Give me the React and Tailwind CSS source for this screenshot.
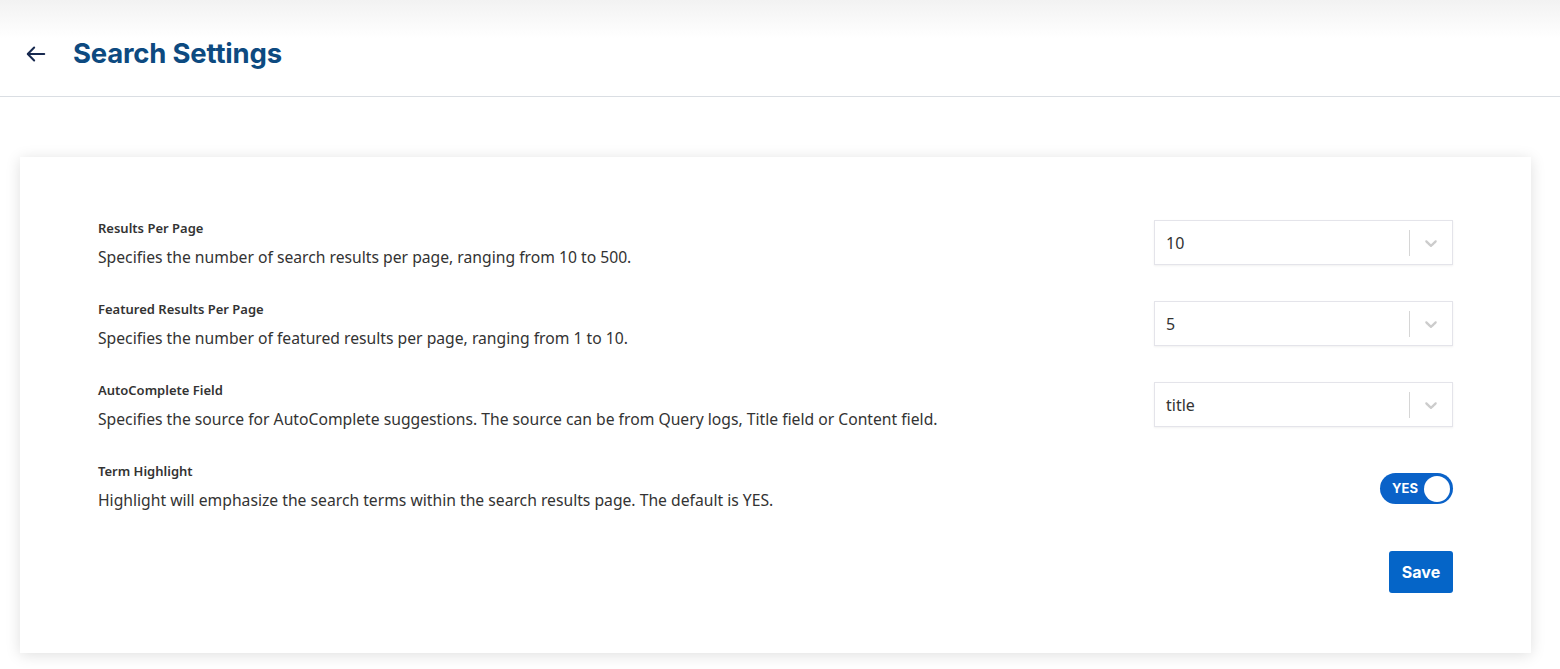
import { useState } from 'react'

const settings = [
  { label: 'Results Per Page', desc: 'Specifies the number of search results per page, ranging from 10 to 500.', value: '10' },
  { label: 'Featured Results Per Page', desc: 'Specifies the number of featured results per page, ranging from 1 to 10.', value: '5' },
  { label: 'AutoComplete Field', desc: 'Specifies the source for AutoComplete suggestions. The source can be from Query logs, Title field or Content field.', value: 'title' },
]

function Select({ value }) {
  return (
    <div className="w-[299px] h-[45px] shrink-0 bg-white border border-[#e4e4ea] shadow-[0_1px_2px_rgba(0,0,0,0.06)] flex items-center">
      <span className="flex-1 pl-[11px] text-[16px] text-[#333] font-['Noto_Sans',sans-serif]">{value}</span>
      <span className="w-px h-[26px] bg-[#d6d6d6]" />
      <span className="w-[42px] flex items-center justify-center">
        <svg width="20" height="20" viewBox="0 0 20 20" fill="#cccccc">
          <path d="M4.516 7.548c0.436-0.446 1.043-0.481 1.576 0l3.908 3.747 3.908-3.747c0.533-0.481 1.141-0.446 1.574 0 0.436 0.445 0.408 1.197 0 1.615-0.406 0.418-4.695 4.502-4.695 4.502-0.217 0.223-0.502 0.335-0.787 0.335s-0.57-0.112-0.789-0.335c0 0-4.287-4.084-4.695-4.502s-0.436-1.17 0-1.615z" />
        </svg>
      </span>
    </div>
  )
}

export default function App() {
  const [on, setOn] = useState(true)

  return (
    <div className="min-h-[669px] bg-white font-['Noto_Sans',sans-serif]">
      <header className="h-[97px] border-b border-[#dadee3] bg-gradient-to-b from-[#f2f2f2] via-white via-40% to-white flex items-center pl-[25px] pt-[11px]">
        <svg width="22" height="22" viewBox="0 0 24 24" fill="none" stroke="#17294f" strokeWidth="2.2" strokeLinecap="round" strokeLinejoin="round">
          <path d="M21 12H3.5" />
          <path d="M10 5l-7 7 7 7" />
        </svg>
        <h1 className="ml-[26px] text-[27.5px] font-bold text-[#0d4a80] font-['Inter',sans-serif] tracking-[-0.2px]">Search Settings</h1>
      </header>

      <main className="pl-[20px] pr-[29px] pt-[60px]">
        <div className="bg-white shadow-[0_2px_14px_rgba(0,0,0,0.13)] pl-[78px] pr-[78px] pt-[63px] pb-[60px]">
          <div className="flex flex-col gap-[33px]">
            {settings.map(s => (
              <div key={s.label} className="flex justify-between items-start">
                <div>
                  <p className="text-[13px] leading-[16px] font-semibold text-[#333]">{s.label}</p>
                  <p className="mt-[10px] text-[15.7px] leading-[22px] text-[#333]">{s.desc}</p>
                </div>
                <Select value={s.value} />
              </div>
            ))}
            <div className="flex justify-between items-start">
              <div>
                <p className="text-[13px] leading-[16px] font-semibold text-[#333]">Term Highlight</p>
                <p className="mt-[10px] text-[15.7px] leading-[22px] text-[#333]">Highlight will emphasize the search terms within the search results page. The default is YES.</p>
              </div>
              <button onClick={() => setOn(!on)}
                className={`mt-[10px] w-[73px] h-[31px] rounded-full flex items-center px-[3px] ${on ? 'bg-[#0a62c8] justify-between' : 'bg-[#c8c8c8] flex-row-reverse justify-between'}`}>
                <span className="pl-[9px] text-[13px] font-bold text-white font-['Inter',sans-serif]">{on ? 'YES' : 'NO'}</span>
                <span className="w-[26px] h-[26px] rounded-full bg-white" />
              </button>
            </div>
          </div>
          <div className="flex justify-end mt-[40px]">
            <button className="w-[64px] h-[42px] rounded-[3px] bg-[#0565c8] text-white text-[16px] font-bold font-['Inter',sans-serif]">Save</button>
          </div>
        </div>
      </main>
    </div>
  )
}
